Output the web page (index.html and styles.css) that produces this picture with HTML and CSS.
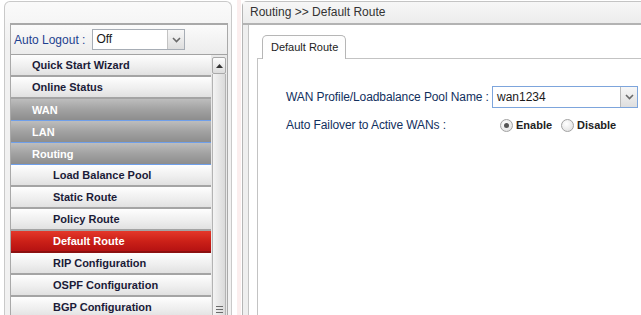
FILE: index.html
```html
<!DOCTYPE html>
<html lang="en">
  <head>
    <meta charset="UTF-8" />
    <title>Routing - Default Route</title>
    <link rel="stylesheet" href="styles.css">
  </head>
  <body>
    <div class="page">
      <aside class="side">
        <div class="side-box">
          <div class="logout">
            <span class="logout-label">Auto Logout :</span>
            <div class="combo combo-small">
              <span class="combo-value">Off</span>
              <span class="combo-btn">
                <svg width="9" height="6" viewBox="0 0 9 6"><path d="M1 1l3.5 3.5L8 1" fill="none" stroke="#6a6a6a" stroke-width="1.6"/></svg>
              </span>
            </div>
          </div>

          <div class="menu">
            <ul class="menu-list">
              <li class="item">Quick Start Wizard</li>
              <li class="item">Online Status</li>
              <li class="item group">WAN</li>
              <li class="item group">LAN</li>
              <li class="item group">Routing</li>
              <li class="item sub">Load Balance Pool</li>
              <li class="item sub">Static Route</li>
              <li class="item sub">Policy Route</li>
              <li class="item sub active">Default Route</li>
              <li class="item sub">RIP Configuration</li>
              <li class="item sub">OSPF Configuration</li>
              <li class="item sub">BGP Configuration</li>
            </ul>
            <div class="scrollbar">
              <div class="scroll-up">
                <svg width="7" height="4" viewBox="0 0 7 4"><path d="M0 4L3.5 0 7 4z" fill="#333"/></svg>
              </div>
              <div class="scroll-thumb">
                <span class="grip"></span>
                <span class="grip"></span>
                <span class="grip"></span>
                <span class="grip"></span>
              </div>
            </div>
          </div>
        </div>
      </aside>

      <div class="splitter"></div>

      <main class="main">
        <div class="crumb">Routing &gt;&gt; Default Route</div>
        <div class="main-body">
          <div class="content">
            <div class="tabs">
              <div class="tab">Default Route</div>
            </div>
            <div class="tab-panel">
              <div class="form">
                <label class="form-label">WAN Profile/Loadbalance Pool Name :</label>
                <div class="combo combo-wan">
                  <span class="combo-value">wan1234</span>
                  <span class="combo-btn">
                    <svg width="9" height="6" viewBox="0 0 9 6"><path d="M1 1l3.5 3.5L8 1" fill="none" stroke="#6a6a6a" stroke-width="1.6"/></svg>
                  </span>
                </div>

                <label class="form-label">Auto Failover to Active WANs :</label>
                <div class="radios">
                  <span class="radio on"></span><span class="radio-text">Enable</span>
                  <span class="radio"></span><span class="radio-text">Disable</span>
                </div>
              </div>
            </div>
          </div>
        </div>
      </main>
    </div>
  </body>
</html>
```

FILE: styles.css
```css
html,
body {
  margin: 0;
  padding: 0;
  background-color: #fff;
  font-family: "Liberation Sans", Arial, sans-serif;
  font-size: 12px;
}

.page {
  display: flex;
  width: 641px;
  height: 315px;
  overflow: hidden;
}

/* left navigation */

.side {
  flex: none;
  box-sizing: border-box;
  width: 228px;
  margin: 1px 0 0 4px;
  padding: 21px 3px 0 5px;
  border: 1px solid #c9c9c9;
  border-bottom: none;
  border-radius: 6px 6px 0 0;
  background: linear-gradient(#fafafa, #f1f1f1 40px, #f1f1f1);
}

.side-box {
  border: 1px solid #a9a9a9;
  border-top-width: 2px;
  border-bottom: none;
  background-color: #e4e4e4;
}

.logout {
  display: flex;
  align-items: center;
  height: 29px;
  padding-left: 3px;
  border-bottom: 1px solid #a3a3a3;
  background: linear-gradient(#fbfbfb, #ececec);
}

.logout-label {
  color: #1d3f8f;
}

.combo {
  display: flex;
  box-sizing: border-box;
  border: 1px solid #a7adb5;
  background-color: #fff;
}

.combo-small {
  width: 93px;
  height: 21px;
  margin-left: 7px;
}

.combo-value {
  flex: 1;
  padding-left: 3px;
  line-height: 19px;
  color: #1a1a1a;
}

.combo-btn {
  display: flex;
  align-items: center;
  justify-content: center;
  width: 16px;
  border-left: 1px solid #c3c3c3;
  background: linear-gradient(#f7f7f7, #dedede);
}

.menu {
  display: flex;
}

.menu-list {
  flex: none;
  width: 200px;
  margin: 0;
  padding: 0;
  list-style: none;
}

.item {
  box-sizing: border-box;
  height: 22px;
  padding-left: 21px;
  line-height: 21px;
  font-size: 11px;
  font-weight: bold;
  color: #1b1b38;
  border-bottom: 2px solid #a4a4a4;
  background: linear-gradient(#fefefe, #efefef 55%, #e1e1e1);
}

.item.sub {
  padding-left: 42px;
}

.item.group {
  color: #fff;
  border-bottom: 1px solid #6f9fea;
  line-height: 22px;
  background: linear-gradient(#bdbdbd, #a2a2a2 50%, #8d8d8d);
}

.item.active {
  color: #fff;
  border-bottom-color: #8c1010;
  background: linear-gradient(#e4382a, #cc2118 50%, #b51212);
}

.scrollbar {
  flex: 1;
  display: flex;
  flex-direction: column;
  padding: 2px 1px 0;
  background-color: #e9e9e9;
}

.scroll-up {
  display: flex;
  align-items: center;
  justify-content: center;
  box-sizing: border-box;
  height: 17px;
  border: 1px solid #a9a9a9;
  border-radius: 2px;
  background: linear-gradient(#fdfdfd, #dcdcdc);
}

.scroll-thumb {
  flex: 1;
  display: flex;
  flex-direction: column;
  justify-content: flex-end;
  align-items: center;
  gap: 2px;
  padding-bottom: 2px;
  border: 1px solid #b3b3b3;
  border-top: none;
  background: linear-gradient(90deg, #f4f4f4, #dadada);
}

.grip {
  width: 7px;
  height: 1px;
  background-color: #6b6b6b;
}

.splitter {
  flex: none;
  width: 10px;
  background: linear-gradient(90deg, #fff 0, #fff 5px, #fbeeee 5px, #fbeeee 9px, #fff 9px);
}

/* main area */

.main {
  flex: 1;
  display: flex;
  flex-direction: column;
  margin-top: 1px;
  border-left: 1px solid #b5b5b5;
  border-top: 1px solid #c4c4c4;
  border-radius: 5px 0 0 0;
}

.crumb {
  height: 21px;
  padding-left: 7px;
  line-height: 21px;
  color: #333;
  border-bottom: 2px solid #b3b3b3;
  background: linear-gradient(#f7f7f7, #ececec);
}

.main-body {
  flex: 1;
  display: flex;
  padding-left: 5px;
  background-color: #efefef;
}

.content {
  flex: 1;
  display: flex;
  flex-direction: column;
  padding-left: 8px;
  border-left: 1px solid #c3c3c3;
  background-color: #fff;
}

.tabs {
  display: flex;
  padding: 10px 0 0 5px;
}

.tab {
  position: relative;
  box-sizing: border-box;
  width: 84px;
  height: 24px;
  margin-bottom: -1px;
  padding-left: 8px;
  line-height: 22px;
  font-size: 11px;
  color: #222;
  border: 1px solid #b6b6b6;
  border-bottom: none;
  border-radius: 5px 5px 0 0;
  background: linear-gradient(#fdfdfd, #fff);
}

.tab-panel {
  flex: 1;
  padding: 27px 0 0 28px;
  border-top: 1px solid #c3c3c3;
  border-left: 1px solid #c3c3c3;
}

.form {
  display: grid;
  grid-template-columns: 206px auto;
  grid-auto-rows: 22px;
  row-gap: 6px;
  align-items: center;
}

.form-label {
  white-space: nowrap;
  letter-spacing: -0.1px;
  color: #12305e;
}

.combo-wan {
  width: 146px;
  height: 22px;
  border-color: #7da5dc;
}

.combo-wan .combo-value {
  padding-left: 4px;
  line-height: 20px;
}

.combo-wan .combo-btn {
  border-left-color: #b9b9b9;
}

.radios {
  display: flex;
  align-items: center;
  padding-left: 8px;
}

.radio {
  box-sizing: border-box;
  display: flex;
  align-items: center;
  justify-content: center;
  width: 13px;
  height: 13px;
  border: 1px solid #a2a2a2;
  border-radius: 50%;
  background: radial-gradient(circle at 40% 35%, #fff, #dcdcdc);
}

.radio.on::after {
  content: "";
  width: 5px;
  height: 5px;
  border-radius: 50%;
  background-color: #555;
}

.radio-text {
  margin: 0 9px 0 3px;
  font-size: 11px;
  font-weight: bold;
  color: #222;
}
```
